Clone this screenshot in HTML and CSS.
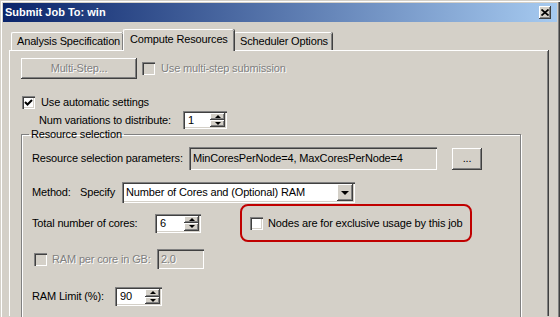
FILE: index.html
```html
<!DOCTYPE html>
<html>
<head>
    <title>Submit Job To: win</title>
    <link rel="stylesheet" href="styles.css">
</head>
<body>

<div class="window">
    <div class="titlebar">
        <span class="title">Submit Job To: win</span>
        <span class="close-btn">
            <svg width="8" height="7" viewBox="0 0 8 7"><path d="M0.5 0.5 L7.5 6.5 M7.5 0.5 L0.5 6.5" stroke="#000" stroke-width="1.7"/></svg>
        </span>
    </div>

    <div class="tabs">
        <div class="tab tab-analysis">Analysis Specification</div>
        <div class="tab tab-compute selected">Compute Resources</div>
        <div class="tab tab-scheduler">Scheduler Options</div>
    </div>

    <div class="panel">
        <div class="row row-multistep">
            <div class="btn btn-multistep disabled-text">Multi-Step...</div>
            <div class="check check-multistep">
                <span class="box box-disabled"></span>
                <span class="disabled-text">Use multi-step submission</span>
            </div>
        </div>

        <div class="row row-auto">
            <div class="check">
                <span class="box">
                    <svg width="9" height="9" viewBox="0 0 9 9"><path d="M1 4 L3.5 6.5 L8 2" fill="none" stroke="#000" stroke-width="2"/></svg>
                </span>
                <span>Use automatic settings</span>
            </div>
        </div>

        <div class="row row-variations">
            <span class="lbl lbl-variations">Num variations to distribute:</span>
            <div class="spin spin-variations">
                <span class="spin-val">1</span>
                <span class="spin-btns"><span class="spin-up"><i class="arrow-up"></i></span><span class="spin-down"><i class="arrow-down"></i></span></span>
            </div>
        </div>

        <fieldset class="group">
            <legend>Resource selection</legend>

            <div class="row row-params">
                <span class="lbl lbl-params">Resource selection parameters:</span>
                <div class="field field-params">MinCoresPerNode=4, MaxCoresPerNode=4</div>
                <div class="btn btn-dots">...</div>
            </div>

            <div class="row row-method">
                <span class="lbl lbl-method">Method:</span>
                <span class="lbl lbl-specify">Specify</span>
                <div class="combo">
                    <span class="combo-val">Number of Cores and (Optional) RAM</span>
                    <span class="combo-btn"><i class="arrow-combo"></i></span>
                </div>
            </div>

            <div class="row row-cores">
                <span class="lbl lbl-cores">Total number of cores:</span>
                <div class="spin spin-cores">
                    <span class="spin-val">6</span>
                    <span class="spin-btns"><span class="spin-up"><i class="arrow-up"></i></span><span class="spin-down"><i class="arrow-down"></i></span></span>
                </div>
                <div class="highlight">
                    <div class="check">
                        <span class="box"></span>
                        <span>Nodes are for exclusive usage by this job</span>
                    </div>
                </div>
            </div>

            <div class="row row-ram">
                <div class="check check-ram">
                    <span class="box box-disabled"></span>
                    <span class="disabled-text">RAM per core in GB:</span>
                </div>
                <div class="field field-ram disabled-text">2.0</div>
            </div>

            <div class="row row-limit">
                <span class="lbl lbl-limit">RAM Limit (%):</span>
                <div class="spin spin-limit">
                    <span class="spin-val">90</span>
                    <span class="spin-btns"><span class="spin-up"><i class="arrow-up"></i></span><span class="spin-down"><i class="arrow-down"></i></span></span>
                </div>
            </div>
        </fieldset>
    </div>
</div>

</body>
</html>
```

FILE: styles.css
```css
* {
    box-sizing: border-box;
}
body {
    margin: 0;
    background: #d4d0c8;
    font: 11px/13px "Liberation Sans", Arial, sans-serif;
    letter-spacing: -0.15px;
    color: #000;
    overflow: hidden;
}
.window {
    width: 560px;
    height: 317px;
    padding: 3px 3px 0;
    overflow: hidden;
    box-shadow: inset 1px 1px #d4d0c8, inset 2px 2px #fff, inset -1px 0 #404040, inset -2px 0 #808080;
}

/* title bar */
.titlebar {
    height: 19px;
    display: flex;
    align-items: center;
    justify-content: space-between;
    padding: 0 6px 0 2px;
    background: linear-gradient(to right, #0a246a, #a6caf0);
}
.title {
    color: #fff;
    font-weight: bold;
    letter-spacing: 0;
}
.close-btn {
    width: 12px;
    height: 13px;
    display: flex;
    align-items: center;
    justify-content: center;
    background: #d4d0c8;
    box-shadow: inset -1px -1px #404040, inset 1px 1px #fff, inset -2px -2px #808080;
}

/* tabs */
.tabs {
    display: flex;
    align-items: flex-end;
    height: 21px;
    margin-top: 7px;
    padding-left: 8px;
}
.tab {
    height: 18px;
    padding-left: 5px;
    line-height: 17px;
    white-space: nowrap;
    border-top: 1px solid #fff;
    border-left: 1px solid #fff;
    border-radius: 2px 2px 0 0;
    box-shadow: inset -1px 0 #808080, 1px 0 #404040;
}
.tab-analysis {
    width: 112px;
}
.tab-compute {
    width: 111px;
}
.tab-scheduler {
    width: 98px;
}
.tab.selected {
    height: 22px;
    margin-bottom: -1px;
    padding-left: 6px;
    line-height: 19px;
    position: relative;
    z-index: 1;
    background: #d4d0c8;
}

/* tab page */
.panel {
    height: 266px;
    margin: 0 9px 0 6px;
    padding: 7px 0 0 11px;
    border-top: 1px solid #fff;
    border-left: 1px solid #fff;
    box-shadow: inset -1px 0 #808080, 1px 0 #404040;
}
.row {
    display: flex;
    align-items: center;
}
.lbl {
    flex: none;
    white-space: nowrap;
}
.disabled-text {
    color: #808080;
    text-shadow: 1px 1px #fff;
}

/* buttons, fields */
.btn {
    display: flex;
    align-items: center;
    justify-content: center;
    background: #d4d0c8;
    box-shadow: inset -1px -1px #404040, inset 1px 1px #fff, inset -2px -2px #808080;
}
.field {
    padding: 0 4px;
    display: flex;
    align-items: center;
    white-space: nowrap;
    overflow: hidden;
    box-shadow: inset 1px 1px #808080, inset 2px 2px #404040, inset -1px -1px #fff, inset -2px -2px #d4d0c8;
}

/* checkboxes */
.check {
    display: flex;
    align-items: center;
    gap: 6px;
    white-space: nowrap;
}
.box {
    flex: none;
    width: 13px;
    height: 13px;
    display: flex;
    align-items: center;
    justify-content: center;
    background: #fff;
    box-shadow: inset 1px 1px #808080, inset 2px 2px #404040, inset -1px -1px #fff, inset -2px -2px #d4d0c8;
}
.box-disabled {
    background: #d4d0c8;
}

/* spinners */
.spin {
    display: flex;
    padding: 2px;
    background: #fff;
    box-shadow: inset 1px 1px #808080, inset 2px 2px #404040, inset -1px -1px #fff, inset -2px -2px #d4d0c8;
}
.spin-val {
    flex: 1;
    padding-left: 3px;
    display: flex;
    align-items: center;
}
.spin-btns {
    width: 15px;
    display: flex;
    flex-direction: column;
}
.spin-up, .spin-down {
    flex: 1;
    display: flex;
    align-items: center;
    justify-content: center;
    background: #d4d0c8;
    box-shadow: inset -1px -1px #404040, inset 1px 1px #fff, inset -2px -2px #808080;
}
.arrow-up {
    border-left: 3px solid transparent;
    border-right: 3px solid transparent;
    border-bottom: 3px solid #000;
}
.arrow-down {
    border-left: 3px solid transparent;
    border-right: 3px solid transparent;
    border-top: 3px solid #000;
}

/* top rows */
.row-multistep {
    height: 21px;
}
.btn-multistep {
    width: 116px;
    height: 21px;
    margin-right: 5px;
}
.row-auto {
    margin-top: 17px;
    padding-left: 1px;
}
.row-variations {
    margin-top: 2px;
    padding-left: 18px;
}
.lbl-variations {
    width: 144px;
}
.spin-variations {
    width: 44px;
    height: 18px;
}

/* resource selection group */
.group {
    width: 500px;
    margin: -1px 0 0;
    padding: 6px 0 0 10px;
    border: 1px solid #808080;
    box-shadow: inset 1px 1px #fff, 1px 1px #fff;
    min-width: 0;
    height: 200px;
}
.group legend {
    margin-left: -3px;
    padding: 0 2px;
    line-height: 13px;
}
.row-params {
    height: 23px;
}
.lbl-params {
    width: 157px;
}
.field-params {
    width: 248px;
    height: 23px;
}
.btn-dots {
    width: 30px;
    height: 22px;
    margin-left: 15px;
}
.row-method {
    height: 21px;
    margin-top: 12px;
}
.lbl-method {
    width: 48px;
}
.lbl-specify {
    width: 42px;
}
.combo {
    width: 233px;
    height: 21px;
    display: flex;
    padding: 2px;
    background: #fff;
    box-shadow: inset 1px 1px #808080, inset 2px 2px #404040, inset -1px -1px #fff, inset -2px -2px #d4d0c8;
}
.combo-val {
    flex: 1;
    padding-left: 2px;
    display: flex;
    align-items: center;
    white-space: nowrap;
}
.combo-btn {
    width: 16px;
    display: flex;
    align-items: center;
    justify-content: center;
    background: #d4d0c8;
    box-shadow: inset -1px -1px #404040, inset 1px 1px #fff, inset -2px -2px #808080;
}
.arrow-combo {
    border-left: 4px solid transparent;
    border-right: 4px solid transparent;
    border-top: 4px solid #000;
}
.row-cores {
    height: 38px;
    margin-top: 1px;
}
.lbl-cores {
    width: 123px;
}
.spin-cores {
    width: 46px;
    height: 19px;
    margin-right: 39px;
}
.highlight {
    width: 232px;
    height: 38px;
    display: flex;
    align-items: center;
    padding-left: 8px;
    border: 2px solid #c00000;
    border-radius: 8px;
}
.highlight .check {
    gap: 5px;
}
.row-ram {
    height: 20px;
    margin-top: 7px;
    padding-left: 2px;
}
.check-ram {
    width: 123px;
    gap: 5px;
}
.field-ram {
    width: 47px;
    height: 20px;
}
.row-limit {
    height: 19px;
    margin-top: 18px;
}
.lbl-limit {
    width: 83px;
}
.spin-limit {
    width: 47px;
    height: 19px;
}
```
